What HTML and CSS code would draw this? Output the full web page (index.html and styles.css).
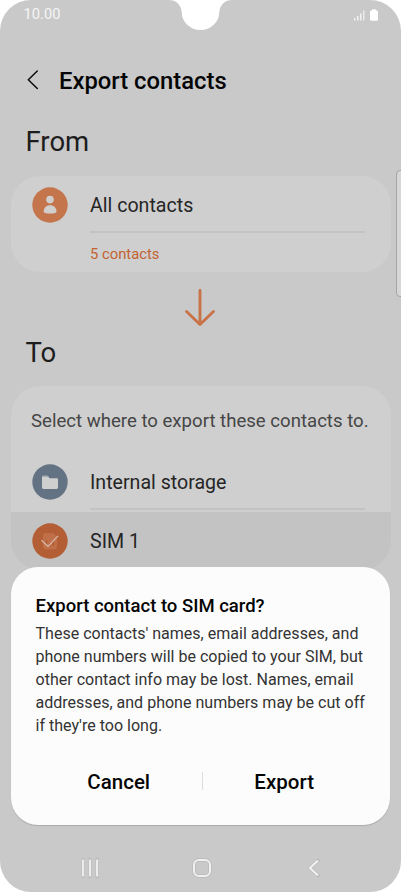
FILE: index.html
```html
<!DOCTYPE html>
<html lang="en">
<head>
<meta charset="utf-8">
<title>Export contacts</title>
<link rel="stylesheet" href="styles.css">
</head>
<body>
<div class="phone">
  <svg class="notch" width="64" height="31" viewBox="0 0 64 31"><path d="M0 0C7 0 12 4.500 12.700 12A18.800 18 0 0 0 50.300 12C51 4.500 56 0 63 0Z" fill="#fff"/></svg>
  <div class="status">
    <span class="clock">10.00</span>
    <svg width="24" height="12" viewBox="0 0 24 12"><g fill="#fff"><path d="M0 9h1.500v2.500H0zM3 7h1.500v4.500H3zM6 4.500h1.500v7H6z" opacity=".75"/><path d="M9 1.500h1.500v10H9z" opacity=".6"/><path d="M17.500 1.500q0-1.200 2.500-1.200t2.500 1.200q1.500.3 1.500 1.500v7.300q0 1.500-1.500 1.500h-5q-1.500 0-1.500-1.500V3q0-1.200 1.500-1.500z"/></g></svg>
  </div>
  <header class="header">
    <svg width="12" height="20" viewBox="0 0 12 20"><path d="M10.300 1L1.300 9.700L10.300 18.500" fill="none" stroke="#0b0b0b" stroke-width="1.500" stroke-linecap="round" stroke-linejoin="round"/></svg>
    <h1>Export contacts</h1>
  </header>
  <h2 class="from">From</h2>
  <section class="card source">
    <div class="row">
      <svg class="icon" viewBox="0 0 36 36"><circle cx="18" cy="18" r="17.700" fill="#c5754c"/><circle cx="18" cy="12.600" r="3.800" fill="#d0cfce"/><path d="M11.700 24.500C11.700 16.300 24.500 16.300 24.500 24.500Q24.500 26.600 18.100 26.600T11.700 24.500z" fill="#d0cfce"/></svg>
      <span class="label all">All contacts</span>
    </div>
    <div class="count">5 contacts</div>
  </section>
  <div class="arrow"><svg width="32" height="38" viewBox="0 0 32 38"><path d="M16 1.500V35M2.500 22.500L16 35.500L29.500 22.500" fill="none" stroke="#c87348" stroke-width="2.900" stroke-linecap="round" stroke-linejoin="round"/></svg></div>
  <h2 class="to">To</h2>
  <section class="card targets">
    <p class="hint">Select where to export these contacts to.</p>
    <div class="row storage">
      <svg class="icon" viewBox="0 0 36 36"><circle cx="18" cy="18" r="17.700" fill="#637384"/><path d="M10 13.300V12.500q0-1 1-1h4.200q.7 0 1.200.8l.7 1z" fill="#a5abb1"/><path d="M10 13.100h6.500l1 1.200h7.200q1.300 0 1.300 1.300v8q0 1.400-1.400 1.400H11.400Q10 25 10 23.600z" fill="#d0cfcf"/></svg>
      <span class="label internal">Internal storage</span>
    </div>
    <div class="row sim">
      <svg class="icon" viewBox="0 0 36 36"><circle cx="18" cy="18" r="17.700" fill="#b45e35"/><path d="M13 10.300h8.500l3.500 3.500v10q0 2.500-2.500 2.500H13.500Q11 26.300 11 23.800V12.500q0-2.200 2-2.200z" fill="#c07048"/><path d="M14.500 17v4M18 20v3M21.500 19v4" stroke="#b05830" stroke-width="1.300"/><path d="M9.500 17.300L16 23.500L26 12.800" fill="none" stroke="#d5b9aa" stroke-width="1.200"/></svg>
      <span class="label sim-label">SIM 1</span>
    </div>
  </section>
  <div class="edge-handle"></div>
  <section class="dialog">
    <h3>Export contact to SIM card?</h3>
    <p>These contacts' names, email addresses, and<br>phone numbers will be copied to your SIM, but<br>other contact info may be lost. Names, email<br>addresses, and phone numbers may be cut off<br>if they're too long.</p>
    <div class="actions"><span class="cancel">Cancel</span><i></i><span class="export">Export</span></div>
  </section>
  <nav class="nav">
    <svg width="20" height="22" viewBox="0 0 20 22"><path d="M3 2.500v17M10 2.500v17M17 2.500v17" stroke="#b9b9b9" stroke-width="3.600" stroke-linecap="round"/><path d="M3 2.500v17M10 2.500v17M17 2.500v17" stroke="#ececec" stroke-width="2.300"/></svg>
    <svg class="home" width="22" height="22" viewBox="0 0 22 22"><rect x="3" y="3" width="16" height="16" rx="5" fill="none" stroke="#b9b9b9" stroke-width="3.400"/><rect x="3" y="3" width="16" height="16" rx="5" fill="none" stroke="#f0f0f0" stroke-width="2"/></svg>
    <svg width="14" height="22" viewBox="0 0 14 22"><path d="M11 3.500L3 11L11 18.500" fill="none" stroke="#b9b9b9" stroke-width="3.600" stroke-linecap="round"/><path d="M11 3.500L3 11L11 18.500" fill="none" stroke="#f0f0f0" stroke-width="2.300"/></svg>
  </nav>
</div>
</body>
</html>
```
FILE: styles.css
```css
* { box-sizing: border-box; }
body { margin: 0; background: #fff; font-family: Roboto, "Liberation Sans", sans-serif; }
h1, h2, h3, p { margin: 0; font-weight: 400; }
svg { display: block; flex: none; }
.phone { position: relative; width: 401px; height: 892px; overflow: hidden; border-radius: 31px; background: #c9c9c9; display: flex; flex-direction: column; }
.notch { position: absolute; left: 169px; top: 0; }
.status { height: 30px; flex: none; padding: 0 23px 2px 23.500px; display: flex; align-items: center; justify-content: space-between; color: #f5f5f5; }
.clock { font-size: 14.700px; }
.status svg { margin-top: 1px; }
.header { height: 101px; flex: none; padding-left: 27px; display: flex; align-items: center; gap: 20px; }
.header h1 { font-size: 23.800px; font-weight: 500; line-height: 30px; color: #050505; white-space: nowrap; }
.header svg { margin-top: -1px; }
h2 { padding: 0 0 0 25.500px; height: 32px; flex: none; line-height: 32px; font-size: 27.500px; color: #1d1d1d; }
.from { margin-top: -5px; }
.to { padding-top: 1px; }
.card { margin: 0 10.500px; flex: none; border-radius: 29px; background: #cfcfcf; overflow: hidden; }
.source { margin-top: 18px; height: 96px; }
.row { display: flex; align-items: center; height: 59px; padding-left: 21.500px; }
.icon { width: 36px; height: 36px; }
.label { margin-left: 22px; flex: 1; height: 59px; line-height: 59px; font-size: 19.600px; color: #252525; white-space: nowrap; }
.all, .internal { margin-right: 25.500px; }
.source .row { height: 57px; }
.source .icon { margin-top: 1px; }
.all { height: 57px; line-height: 60px; border-bottom: 2px solid #c3c3c3; }
.count { margin-left: 79.500px; font-size: 14.800px; line-height: 42px; color: #c4622f; }
.arrow { height: 64px; flex: none; display: flex; justify-content: center; align-items: center; padding-top: 7px; }
.arrow svg { margin-right: .500px; }
.targets { margin-top: 18px; height: 184px; }
.hint { height: 67px; padding-left: 20.500px; line-height: 71px; font-size: 18.600px; color: #464646; white-space: nowrap; }
.storage .icon { margin-top: -1px; }
.internal { height: 55px; line-height: 56px; margin-top: -1px; border-bottom: 2px solid #c3c3c3; }
.sim { background: #c3c3c3; }
.sim .icon { margin-top: -2px; }
.edge-handle { position: absolute; left: 396px; top: 170px; width: 10px; height: 127px; border: 1px solid #a4a4a4; border-radius: 4px; background: #d6d6d6; }
.dialog { position: absolute; left: 10.500px; top: 567px; width: 379.900px; height: 258px; padding: 27px 0 0 25px; border-radius: 27px; background: #fcfcfc; box-shadow: 0 1px 1px #aaa; }
.dialog h3 { font-size: 18.500px; font-weight: 500; line-height: 24px; color: #050505; white-space: nowrap; }
.dialog p { margin-top: 4px; font-size: 16.040px; line-height: 23px; color: #333; white-space: nowrap; }
.actions { display: flex; align-items: center; margin: 31px 0 0 -25px; height: 28px; padding: 0 23px 0 25px; font-size: 20.500px; font-weight: 500; color: #050505; }
.actions span { flex: 1; text-align: center; }
.actions i { width: 1px; height: 18px; margin-bottom: 3px; background: #ddd; }
.export { margin-left: -2px; }
.nav { margin: auto 80px 13px 80px; display: flex; align-items: center; justify-content: space-between; }
.home { margin-right: 4px; }
```
